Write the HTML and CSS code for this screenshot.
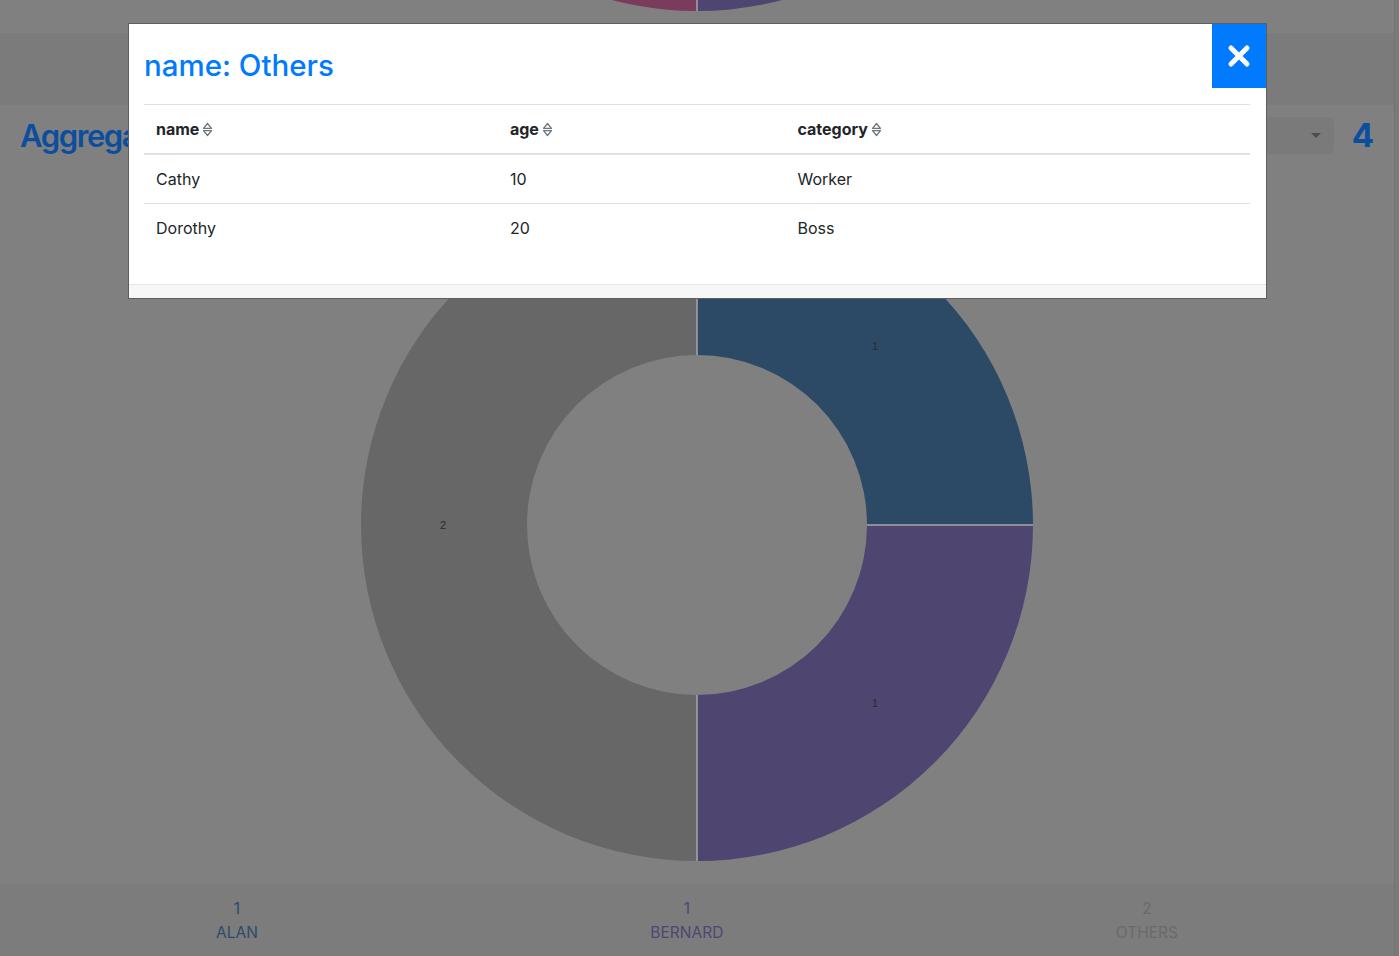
FILE: index.html
```html
<!DOCTYPE html>
<html lang="en">
<head>
<meta charset="utf-8">
<title>Aggregation</title>
<link rel="stylesheet" href="styles.css">
</head>
<body>
<div class="app">
  <div class="page">
    <div class="prev-chart">
      <svg width="1394" height="33" viewBox="0 0 1394 33">
        <path class="seg-pink" d="M697,11 A336,336 0 0 1 361,-325 L527,-325 A170,170 0 0 0 697,-155 Z"/>
        <path class="seg-purple" d="M1033,-325 A336,336 0 0 1 697,11 L697,-155 A170,170 0 0 0 867,-325 Z"/>
        <path class="sep" d="M697,-155 L697,11"/>
      </svg>
    </div>
    <header class="topbar"></header>
    <div class="title-row">
      <h1 class="title">Aggregation</h1>
      <div class="controls">
        <div class="select"><span class="caret"></span></div>
        <span class="count">4</span>
      </div>
    </div>
    <div class="chart">
      <svg width="700" height="730" viewBox="0 0 700 730">
        <path class="seg-blue" d="M350,35 A336,336 0 0 1 686,371 L520,371 A170,170 0 0 0 350,201 Z"/>
        <path class="seg-purple" d="M686,371 A336,336 0 0 1 350,707 L350,541 A170,170 0 0 0 520,371 Z"/>
        <path class="seg-gray" d="M350,707 A336,336 0 0 1 350,35 L350,201 A170,170 0 0 0 350,541 Z"/>
        <path class="sep" d="M350,35 L350,201 M520,371 L686,371 M350,541 L350,707"/>
        <text class="seg-label" x="528" y="196">1</text>
        <text class="seg-label" x="528" y="553">1</text>
        <text class="seg-label" x="96" y="375">2</text>
      </svg>
    </div>
    <footer class="legend">
      <div class="legend-item alan"><div>1</div><div>ALAN</div></div>
      <div class="legend-item bernard"><div>1</div><div>BERNARD</div></div>
      <div class="legend-item others"><div>2</div><div>OTHERS</div></div>
    </footer>
  </div>
  <div class="rail"></div>
</div>

<div class="modal">
  <div class="modal-header">
    <h2 class="modal-title">name: Others</h2>
    <button class="close" type="button" aria-label="Close">
      <svg width="24" height="24" viewBox="0 0 24 24"><path d="M4 4 L20 20 M20 4 L4 20"/></svg>
    </button>
  </div>
  <div class="modal-body">
    <table class="data-table">
      <thead>
        <tr>
          <th class="col-name"><span class="th-label">name</span><span class="sort"><svg width="11" height="15" viewBox="0 0 11 15"><path d="M1.5 6.3 L5.5 1.5 L9.5 6.3 Z M1.5 8.7 L5.5 13.5 L9.5 8.7 Z"/></svg></span></th>
          <th class="col-age"><span class="th-label">age</span><span class="sort"><svg width="11" height="15" viewBox="0 0 11 15"><path d="M1.5 6.3 L5.5 1.5 L9.5 6.3 Z M1.5 8.7 L5.5 13.5 L9.5 8.7 Z"/></svg></span></th>
          <th class="col-cat"><span class="th-label">category</span><span class="sort"><svg width="11" height="15" viewBox="0 0 11 15"><path d="M1.5 6.3 L5.5 1.5 L9.5 6.3 Z M1.5 8.7 L5.5 13.5 L9.5 8.7 Z"/></svg></span></th>
        </tr>
      </thead>
      <tbody>
        <tr><td>Cathy</td><td>10</td><td>Worker</td></tr>
        <tr><td>Dorothy</td><td>20</td><td>Boss</td></tr>
      </tbody>
    </table>
  </div>
  <div class="modal-footer"></div>
</div>
</body>
</html>
```

FILE: styles.css
```css
html, body {
  margin: 0;
  padding: 0;
  height: 100%;
  overflow: hidden;
}

body {
  background: #808080;
  font-family: "Inter", "Liberation Sans", sans-serif;
  color: #212529;
}

.app {
  display: flex;
  height: 956px;
}

.page {
  flex: 1;
  display: flex;
  flex-direction: column;
  background: #808080;
}

.rail {
  width: 5px;
  background: #7a7a7a;
  border-left: 1px solid #737373;
  box-sizing: border-box;
}

.prev-chart {
  height: 33px;
  overflow: hidden;
}

.prev-chart svg {
  display: block;
}

.seg-pink { fill: #7a3b5c; }
.seg-purple { fill: #4e4570; }
.seg-blue { fill: #2c4a66; }
.seg-gray { fill: #676767; }

.sep {
  fill: none;
  stroke: #a6a6a6;
  stroke-width: 1.5;
}

.seg-label {
  font-family: "Liberation Sans", sans-serif;
  font-size: 11px;
  fill: #2b2b2b;
  text-anchor: middle;
}

.topbar {
  height: 72px;
  background: #7b7b7b;
}

.title-row {
  display: flex;
  align-items: center;
  justify-content: space-between;
  padding: 12px 20px 0 20px;
  height: 37px;
}

.title {
  margin: 0;
  max-width: 108px;
  overflow: hidden;
  font-size: 31px;
  line-height: 37px;
  font-weight: 600;
  letter-spacing: -1.4px;
  color: #0b4e9e;
  white-space: nowrap;
}

.controls {
  display: flex;
  align-items: center;
  gap: 18px;
}

.select {
  width: 200px;
  height: 37px;
  border-radius: 6px;
  background: #7a7a7a;
  display: flex;
  align-items: center;
  justify-content: flex-end;
  padding-right: 13px;
  box-sizing: border-box;
}

.caret {
  width: 0;
  height: 0;
  border-left: 5px solid transparent;
  border-right: 5px solid transparent;
  border-top: 5px solid #4d4d4d;
}

.count {
  font-size: 33px;
  line-height: 37px;
  font-weight: 700;
  color: #0b4e9e;
}

.chart {
  height: 730px;
  display: flex;
  justify-content: center;
}

.chart svg {
  display: block;
}

.legend {
  height: 72px;
  box-sizing: border-box;
  padding: 13px 216px 11px;
  background: #7b7c7b;
  display: flex;
  justify-content: space-between;
  font-family: "Inter", "Liberation Sans", sans-serif;
  font-size: 15.5px;
  line-height: 24px;
}

.legend-item {
  text-align: center;
}

.legend-item.alan { color: #2b4b6b; }
.legend-item.bernard { color: #4f4673; }
.legend-item.others { color: #6a6a6a; }

/* Modal */
.modal {
  position: fixed;
  left: 128px;
  top: 23px;
  width: 1139px;
  box-sizing: border-box;
  background: #ffffff;
  border: 1px solid #5e5e5e;
}

.modal-header {
  position: relative;
  padding: 23px 16px 21px 15px;
}

.modal-title {
  margin: 0;
  font-size: 29.5px;
  line-height: 36px;
  font-weight: 500;
  color: #007bff;
}

.close {
  position: absolute;
  top: 0;
  right: 0;
  width: 54px;
  height: 64px;
  border: none;
  padding: 0;
  background: #007bff;
  display: flex;
  align-items: center;
  justify-content: center;
  cursor: pointer;
}

.close svg path {
  stroke: #ffffff;
  stroke-width: 5;
  stroke-linecap: round;
  fill: none;
}

.modal-body {
  padding: 0 16px 16px 15px;
}

.data-table {
  width: 100%;
  border-collapse: collapse;
  margin-bottom: 16px;
  font-size: 16px;
  line-height: 24px;
  color: #212529;
}

.data-table th,
.data-table td {
  padding: 12px;
  text-align: left;
  border-top: 1px solid #dee2e6;
  vertical-align: top;
}

.data-table thead th {
  border-bottom: 2px solid #dee2e6;
  font-weight: 700;
}

.th-label {
  display: inline-block;
}

.col-name { width: 32%; }
.col-age { width: 26%; }
.col-cat { width: 42%; }

.sort {
  display: inline-block;
  vertical-align: middle;
  margin-left: 3px;
  height: 15px;
  line-height: 0;
  position: relative;
  top: -1px;
}

.sort svg path {
  fill: none;
  stroke: #6c757d;
  stroke-width: 1.3;
  stroke-linejoin: round;
}

.modal-footer {
  height: 13px;
  background: #f7f7f7;
  border-top: 1px solid #e5e5e5;
}
```
